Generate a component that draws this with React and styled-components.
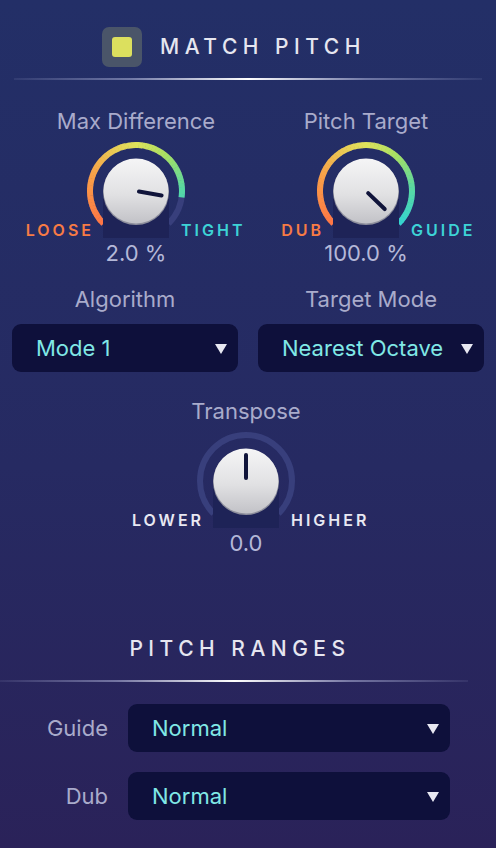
import React from "react";
import styled, { createGlobalStyle } from "styled-components";

const GlobalStyle = createGlobalStyle`
  body {
    margin: 0;
    background: #2a2259;
    font-family: Inter, "Noto Sans", sans-serif;
  }
`;

const Panel = styled.div`
  width: 496px;
  height: 848px;
  overflow: hidden;
  background: linear-gradient(180deg, #232f67 0%, #262a62 55%, #2a2259 100%);
  font-family: Inter, "Noto Sans", sans-serif;
`;

const Header = styled.div`
  display: flex;
  align-items: center;
  justify-content: center;
  gap: 18px;
  padding: 27px 28px 0 0;
`;

const Toggle = styled.div`
  width: 40px;
  height: 40px;
  border-radius: 7px;
  background: #4a5569;
  display: flex;
  align-items: center;
  justify-content: center;
`;

const ToggleFill = styled.div`
  width: 20px;
  height: 20px;
  border-radius: 3px;
  background: #dce05e;
`;

const Title = styled.h2`
  margin: 0;
  font-size: 21px;
  line-height: 26px;
  font-weight: 500;
  letter-spacing: 5.5px;
  color: #e6e6f0;
  text-align: center;
  padding-left: ${(p) => p.$pl || 0}px;
`;

const Divider = styled.div`
  height: 2px;
  margin: ${(p) => p.$m};
  background: linear-gradient(
    90deg,
    rgba(170, 175, 215, 0.1) 0%,
    rgba(190, 195, 230, 0.5) 25%,
    #ffffff 50%,
    rgba(190, 195, 230, 0.5) 75%,
    rgba(170, 175, 215, 0.1) 100%
  );
`;

const KnobRow = styled.div`
  display: flex;
  padding-left: 21px;
  margin-top: 28px;
`;

const KnobBlock = styled.div`
  width: ${(p) => p.$w}px;
  display: flex;
  flex-direction: column;
  align-items: center;
  margin: ${(p) => p.$m || 0};
`;

const Label = styled.div`
  font-size: 22px;
  line-height: 26px;
  color: #a9abcb;
  white-space: nowrap;
`;

const Dial = styled.div`
  display: grid;
  grid-template-columns: minmax(0, 1fr) 90px minmax(0, 1fr);
  width: 100%;
  height: 100px;
  margin-top: 6px;
`;

const SideLabel = styled.div`
  margin-top: 82px;
  font-size: 16px;
  line-height: 16px;
  font-weight: 600;
  letter-spacing: 3px;
  white-space: nowrap;
  color: ${(p) => p.$color};
  justify-self: ${(p) => (p.$left ? "end" : "start")};
  margin-right: ${(p) => (p.$left ? "-3px" : "0")};
`;

const KnobSvg = styled.svg`
  width: 112px;
  height: 100px;
  justify-self: center;
  overflow: visible;
`;

const Value = styled.div`
  font-size: 22px;
  line-height: 26px;
  color: #b4b8d8;
`;

const SelectRow = styled.div`
  display: grid;
  grid-template-columns: 1fr 1fr;
  gap: 20px;
  padding: 0 12px;
  margin-top: 20px;
`;

const Field = styled.div`
  display: flex;
  flex-direction: column;
  align-items: center;
  gap: 12px;
`;

const Select = styled.div`
  width: 100%;
  height: 48px;
  box-sizing: border-box;
  border-radius: 9px;
  background: #0e103b;
  display: flex;
  align-items: center;
  justify-content: space-between;
  padding: 0 11px 0 24px;
  color: #80e8e6;
  font-size: 22px;
  white-space: nowrap;
`;

const Caret = styled.span`
  width: 0;
  height: 0;
  border-left: 6.5px solid transparent;
  border-right: 6.5px solid transparent;
  border-top: 10px solid #e8e8f2;
  margin-top: 1px;
`;

const Ranges = styled.div`
  width: 468px;
  margin-top: 80px;
`;

const RangeList = styled.div`
  display: grid;
  grid-template-columns: 108px 322px;
  column-gap: 20px;
  row-gap: 20px;
  align-items: center;
  margin-top: 22px;
`;

const RangeLabel = styled(Label)`
  text-align: right;
`;

const STOPS = [
  [-135, [255, 117, 69]],
  [-70, [249, 160, 72]],
  [-20, [230, 212, 87]],
  [0, [223, 227, 91]],
  [40, [168, 224, 99]],
  [85, [90, 216, 160]],
  [135, [51, 213, 210]],
];

const colorAt = (a) => {
  for (let i = 0; i < STOPS.length - 1; i++) {
    const [a0, c0] = STOPS[i];
    const [a1, c1] = STOPS[i + 1];
    if (a >= a0 && a <= a1) {
      const t = (a - a0) / (a1 - a0);
      const c = c0.map((v, k) => Math.round(v + (c1[k] - v) * t));
      return `rgb(${c.join(",")})`;
    }
  }
  return "rgb(51,213,210)";
};

const CX = 56;
const CY = 51;
const R = 46;

const pt = (r, a) => {
  const rad = (a * Math.PI) / 180;
  return [CX + r * Math.sin(rad), CY - r * Math.cos(rad)];
};

const arc = (r, a0, a1) => {
  const [x0, y0] = pt(r, a0);
  const [x1, y1] = pt(r, a1);
  const large = a1 - a0 > 180 ? 1 : 0;
  return `M${x0} ${y0} A${r} ${r} 0 ${large} 1 ${x1} ${y1}`;
};

const Knob = ({ id, pointer, fillTo }) => {
  const segs = [];
  if (fillTo != null) {
    const n = 54;
    const step = (fillTo + 135) / n;
    for (let i = 0; i < n; i++) {
      const a0 = -135 + i * step;
      const a1 = Math.min(a0 + step + 0.6, fillTo);
      segs.push(
        <path
          key={i}
          d={arc(R, a0, a1)}
          stroke={colorAt(a0 + step / 2)}
          strokeWidth="6"
          fill="none"
        />
      );
    }
  }
  const [px0, py0] = pt(3, pointer);
  const [px1, py1] = pt(26, pointer);
  return (
    <KnobSvg viewBox="0 0 112 100">
      <defs>
        <linearGradient id={`kg-${id}`} x1="0" y1="0" x2="0" y2="1">
          <stop offset="0%" stopColor="#f5f5f6" />
          <stop offset="55%" stopColor="#e1e1e3" />
          <stop offset="100%" stopColor="#c2c2c7" />
        </linearGradient>
      </defs>
      <path d={arc(R, -135, 135)} stroke="#383f7c" strokeWidth="6" fill="none" />
      {segs}
      <rect x={CX - 33} y={CY} width="66" height="47" fill="#1e2357" />
      <circle cx={CX} cy={CY + 1} r="33" fill="#8d8e9c" />
      <circle cx={CX} cy={CY} r="32.5" fill={`url(#kg-${id})`} />
      <line
        x1={px0}
        y1={py0}
        x2={px1}
        y2={py1}
        stroke="#10143a"
        strokeWidth="4"
        strokeLinecap="round"
      />
    </KnobSvg>
  );
};

const KnobControl = ({ id, label, left, right, leftColor, rightColor, value, pointer, fillTo, w, m }) => (
  <KnobBlock $w={w} $m={m}>
    <Label>{label}</Label>
    <Dial>
      <SideLabel $left $color={leftColor}>{left}</SideLabel>
      <Knob id={id} pointer={pointer} fillTo={fillTo} />
      <SideLabel $color={rightColor}>{right}</SideLabel>
    </Dial>
    <Value>{value}</Value>
  </KnobBlock>
);

const ORANGE = "#f77b45";
const CYAN = "#3dd3d6";
const WHITE = "#e8e8f2";

export default function App() {
  return (
    <Panel>
      <GlobalStyle />
      <Header>
        <Toggle>
          <ToggleFill />
        </Toggle>
        <Title>MATCH PITCH</Title>
      </Header>
      <Divider $m="11px 14px 0" />

      <KnobRow>
        <KnobControl
          id="diff"
          w={230}
          label="Max Difference"
          left="LOOSE"
          right="TIGHT"
          leftColor={ORANGE}
          rightColor={CYAN}
          value="2.0 %"
          pointer={100}
          fillTo={98}
        />
        <KnobControl
          id="target"
          w={230}
          label="Pitch Target"
          left="DUB"
          right="GUIDE"
          leftColor={ORANGE}
          rightColor={CYAN}
          value="100.0 %"
          pointer={134}
          fillTo={135}
        />
      </KnobRow>

      <SelectRow>
        <Field>
          <Label>Algorithm</Label>
          <Select>
            Mode 1
            <Caret />
          </Select>
        </Field>
        <Field>
          <Label>Target Mode</Label>
          <Select>
            Nearest Octave
            <Caret />
          </Select>
        </Field>
      </SelectRow>

      <KnobControl
        id="transpose"
        w={240}
        m="26px 0 0 126px"
        label="Transpose"
        left="LOWER"
        right="HIGHER"
        leftColor={WHITE}
        rightColor={WHITE}
        value="0.0"
        pointer={0}
        fillTo={null}
      />

      <Ranges>
        <Title $pl={12}>PITCH RANGES</Title>
        <Divider $m="18px 0 0" />
        <RangeList>
          <RangeLabel>Guide</RangeLabel>
          <Select>
            Normal
            <Caret />
          </Select>
          <RangeLabel>Dub</RangeLabel>
          <Select>
            Normal
            <Caret />
          </Select>
        </RangeList>
      </Ranges>
    </Panel>
  );
}
